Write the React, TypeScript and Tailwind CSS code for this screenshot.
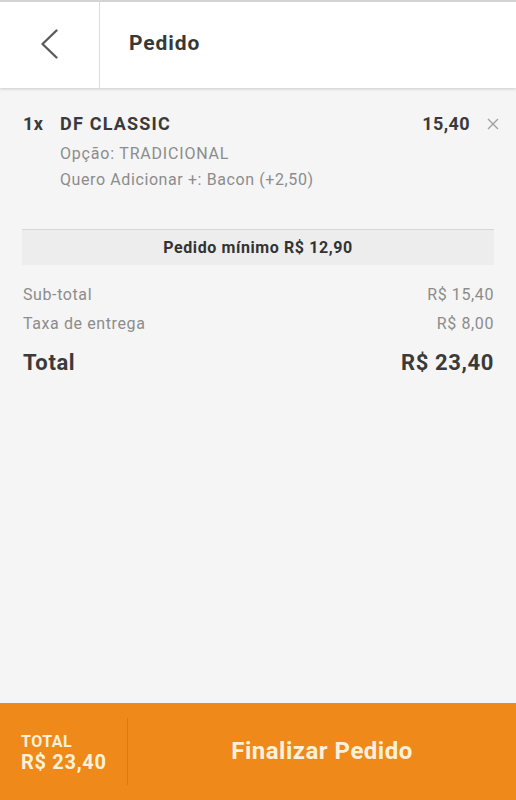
import React from "react";

export default function App() {
  return (
    <div
      className="h-[800px] w-[516px] flex flex-col bg-[#f5f5f5] overflow-hidden"
      style={{ fontFamily: "Roboto, 'Noto Sans', sans-serif" }}
    >
      <header className="relative z-10 h-[88px] shrink-0 flex bg-white border-t-2 border-[#d4d4d4] shadow-[0_1px_3px_rgba(0,0,0,0.18)]">
        <div className="w-[100px] shrink-0 flex items-center justify-center border-r border-[#dcdcdc]">
          <svg width="20" height="32" viewBox="0 0 20 32" className="ml-[1px]">
            <path d="M16.5 1.5 L2.5 15 L16.5 28.5" fill="none" stroke="#5a5a5a" strokeWidth="2.3" strokeLinecap="round" strokeLinejoin="round" />
          </svg>
        </div>
        <div className="flex items-center pl-[29px] pb-[2px] text-[21px] tracking-[0.9px] font-bold text-[#383838]">Pedido</div>
      </header>

      <main className="flex-1 px-[22px] pt-[24px]">
        <div className="flex items-start">
          <div className="w-[38px] pl-[1px] text-[18px] leading-[24px] tracking-[0.5px] font-bold text-[#3a3a3a]">1x</div>
          <div className="flex-1">
            <div className="text-[18px] leading-[24px] tracking-[1.2px] font-bold text-[#3a3a3a]">DF CLASSIC</div>
            <div className="mt-[5px] text-[16px] leading-[26px] tracking-[0.8px] text-[#8c8c8c]">Opção: TRADICIONAL</div>
            <div className="text-[16px] leading-[26px] tracking-[0.6px] text-[#8c8c8c]">Quero Adicionar +: Bacon (+2,50)</div>
          </div>
          <div className="text-[18px] leading-[24px] tracking-[0.4px] font-bold text-[#3a3a3a]">15,40</div>
          <div className="w-[29px] -mr-[5px] flex justify-end pt-[6px]">
            <svg width="12" height="12" viewBox="0 0 12 12">
              <path d="M1 1 L11 11 M11 1 L1 11" stroke="#a0a0a0" strokeWidth="1.4" />
            </svg>
          </div>
        </div>

        <div className="mt-[36px] h-[36px] flex items-center justify-center bg-[#ededed] border-t border-[#d6d6d6] text-[16px] tracking-[0.6px] font-bold text-[#333]">
          Pedido mínimo R$ 12,90
        </div>

        <div className="mt-[15px] flex justify-between text-[16px] leading-[29px] tracking-[0.6px] text-[#8c8c8c]">
          <span className="pl-[1px]">Sub-total</span>
          <span>R$ 15,40</span>
        </div>
        <div className="flex justify-between text-[16px] leading-[29px] tracking-[0.6px] text-[#8c8c8c]">
          <span className="pl-[1px]">Taxa de entrega</span>
          <span>R$ 8,00</span>
        </div>
        <div className="mt-[10px] flex justify-between text-[22px] leading-[30px] tracking-[0.6px] font-bold text-[#3a3a3a]">
          <span className="pl-[1px]">Total</span>
          <span>R$ 23,40</span>
        </div>
      </main>

      <footer className="h-[97px] shrink-0 flex bg-[#ef8a1a] text-[#fcf1dc]">
        <div className="w-[127px] shrink-0 flex flex-col justify-center pl-[21px] pt-[2px]">
          <div className="text-[16px] leading-[18px] tracking-[0.5px] font-bold">TOTAL</div>
          <div className="text-[20px] leading-[22px] tracking-[0.7px] font-bold">R$ 23,40</div>
        </div>
        <div className="w-px my-[15px] bg-[#d97a12]" />
        <div className="flex-1 flex items-center justify-center pb-[2px] text-[24px] tracking-[0.5px] font-bold">
          Finalizar Pedido
        </div>
      </footer>
    </div>
  );
}
